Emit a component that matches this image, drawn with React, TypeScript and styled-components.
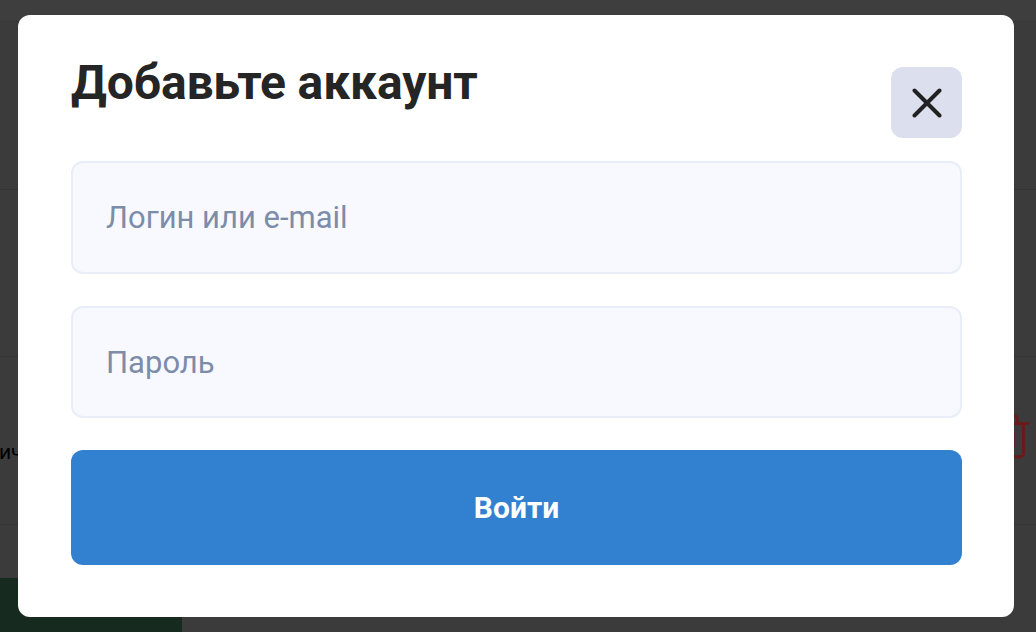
import React from "react";
import styled, { createGlobalStyle } from "styled-components";
import { Trash2 } from "lucide-react";

const GlobalStyle = createGlobalStyle`
  html, body { margin: 0; padding: 0; }
  body {
    width: 1036px;
    height: 632px;
    overflow: hidden;
    font-family: Roboto, "Noto Sans", "Liberation Sans", sans-serif;
    background: #848486;
  }
  * { box-sizing: border-box; }
`;

const Page = styled.div`
  width: 1036px;
  height: 632px;
  display: flex;
  flex-direction: column;
  background: #848486;
`;

const TopStrip = styled.div`
  height: 22px;
  background: #8a8a8a;
  border-bottom: 1px solid #7a7a7a;
`;

const Row = styled.div<{ $h: number }>`
  height: ${(p) => p.$h}px;
  border-bottom: 1px solid #767678;
  display: flex;
  align-items: center;
  justify-content: space-between;
  padding: 0 2px 0 0;
`;

const RowText = styled.span`
  font-size: 21px;
  color: #000;
  margin-top: 22px;
  white-space: nowrap;
  margin-left: -1px;
`;

const DangerIcon = styled.span`
  display: flex;
  color: #e83a3a;
  margin-top: -10px;
`;

const Footer = styled.div`
  flex: 1;
  display: flex;
  align-items: flex-end;
`;

const GreenBlock = styled.div`
  width: 182px;
  height: 54px;
  background: #335d45;
`;

const Overlay = styled.div`
  position: fixed;
  inset: 0;
  background: rgba(0, 0, 0, 0.55);
  display: flex;
  align-items: flex-start;
  justify-content: flex-start;
  padding: 15px 0 0 18px;
`;

const Modal = styled.div`
  width: 996px;
  height: 602px;
  background: #ffffff;
  border-radius: 12px;
  padding: 40px 52px 52px 53px;
  display: flex;
  flex-direction: column;
`;

const Header = styled.div`
  display: flex;
  justify-content: space-between;
  align-items: flex-start;
  margin-bottom: 23px;
`;

const Title = styled.h2`
  margin: 0;
  font-size: 48px;
  line-height: 56px;
  font-weight: 700;
  color: #252525;
  letter-spacing: -0.1px;
`;

const CloseButton = styled.button`
  margin-top: 12px;
  width: 71px;
  height: 71px;
  border: none;
  border-radius: 12px;
  background: #dce0ee;
  display: flex;
  align-items: center;
  justify-content: center;
  padding: 0;
  cursor: pointer;
`;

const Field = styled.input`
  width: 100%;
  height: 113px;
  border: 2px solid #e8edf8;
  border-radius: 12px;
  background: #f7f9fe;
  padding: 0 20px 0 33px;
  font-family: Roboto, "Noto Sans", "Liberation Sans", sans-serif;
  font-size: 31px;
  color: #222;
  outline: none;
  margin-bottom: 32px;

  &::placeholder {
    color: #7d8ca9;
  }
`;

const SubmitButton = styled.button`
  width: 100%;
  height: 115px;
  border: none;
  border-radius: 12px;
  background: #3280d0;
  color: #ffffff;
  font-family: Roboto, "Noto Sans", "Liberation Sans", sans-serif;
  font-size: 30px;
  font-weight: 700;
  cursor: pointer;
`;

const CloseIcon = () => (
  <svg width="30" height="30" viewBox="0 0 30 30" fill="none">
    <path d="M2.5 2.5 L27.5 27.5 M27.5 2.5 L2.5 27.5" stroke="#222" strokeWidth="4" strokeLinecap="round" />
  </svg>
);

export default function App() {
  return (
    <>
      <GlobalStyle />
      <Page>
        <TopStrip />
        <Row $h={168} />
        <Row $h={167} />
        <Row $h={168}>
          <RowText>ичный кабинет</RowText>
          <DangerIcon>
            <Trash2 size={50} strokeWidth={1.5} />
          </DangerIcon>
        </Row>
        <Footer>
          <GreenBlock />
        </Footer>
      </Page>
      <Overlay>
        <Modal>
          <Header>
            <Title>Добавьте аккаунт</Title>
            <CloseButton aria-label="Закрыть">
              <CloseIcon />
            </CloseButton>
          </Header>
          <Field type="text" placeholder="Логин или e-mail" />
          <Field type="password" placeholder="Пароль" />
          <SubmitButton>Войти</SubmitButton>
        </Modal>
      </Overlay>
    </>
  );
}
